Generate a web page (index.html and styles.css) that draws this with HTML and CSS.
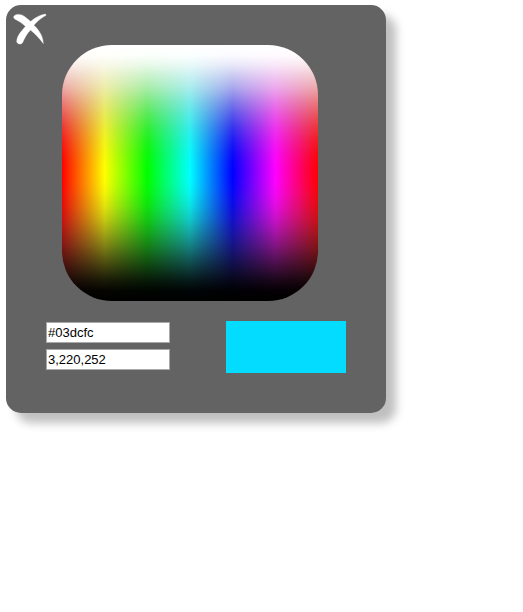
FILE: index.html
```html
<!DOCTYPE html>
<html lang="en">
<head>
<meta charset="utf-8">
<title>Color picker</title>
<link rel="stylesheet" href="styles.css">
</head>
<body>
<div class="picker">
  <button class="close" type="button" aria-label="Close">
    <svg viewBox="0 0 34 32" width="34" height="32"><path d="M1 3C3 .6 8.500 1 11.500 3.500L17.700 8.500C22 4.500 27 2 32.500 1L33 2.300C28.500 4.800 24.500 8 20.800 12.200C26 17 30 23 30.300 30.500C26.500 25.500 22 20.500 17.500 17C13.500 21 11.500 25.500 9.500 29.800C8 31.800 4.800 31.200 3.700 29C3.900 22.700 8 18.500 12.500 13.500C9 9.800 5.500 8 1.700 6C.7 5 .5 4 1 3Z" stroke="#fff" stroke-width=".4"/></svg>
  </button>
  <div class="spectrum"></div>
  <div class="row">
    <div class="fields">
      <input type="text" value="#03dcfc" aria-label="Hex">
      <input type="text" value="3,220,252" aria-label="RGB">
    </div>
    <div class="swatch"></div>
  </div>
</div>
</body>
</html>
```
FILE: styles.css
```css
html { min-height: 100%; background: #fff; }
body { display: flow-root; min-height: 100vh; margin: 0; }
.picker {
  box-sizing: border-box;
  width: 380px;
  height: 408px;
  margin: 5px 0 0 6px;
  padding: 8px 0 0;
  border-radius: 15px;
  background: #636363;
  box-shadow: 10px 10px 10px #bfbfbf;
  display: flow-root;
}
.close {
  display: block;
  width: 34px;
  height: 32px;
  margin-left: 7px;
  padding: 0;
  border: 0;
  background: none;
  fill: #fff;
}
.close svg { display: block; }
.spectrum {
  width: 256px;
  height: 256px;
  margin-left: 56px;
  border-radius: 50px;
  background:
    linear-gradient(
      #fff 0%,
      rgba(255,255,255,.985) 4%,
      rgba(248,248,248,.93) 8%,
      rgba(240,240,240,.84) 12%,
      rgba(230,230,230,.72) 17%,
      rgba(218,218,218,.57) 22%,
      rgba(206,206,206,.42) 27%,
      rgba(193,193,193,.28) 32%,
      rgba(180,180,180,.16) 37%,
      rgba(160,160,160,.07) 42%,
      rgba(140,140,140,.02) 46%,
      rgba(128,128,128,0) 50%,
      rgba(115,115,115,.02) 54%,
      rgba(95,95,95,.07) 58%,
      rgba(75,75,75,.16) 63%,
      rgba(61,61,61,.28) 68%,
      rgba(48,48,48,.42) 73%,
      rgba(37,37,37,.56) 78%,
      rgba(25,25,25,.7) 83%,
      rgba(15,15,15,.83) 88%,
      rgba(7,7,7,.92) 92%,
      rgba(0,0,0,.98) 96%,
      #000 100%),
    linear-gradient(90deg, #f00, #ff0, #0f0, #0ff, #00f, #f0f, #f00);
}
.row {
  display: flex;
  justify-content: space-between;
  margin: 20px 40px 0;
}
.fields {
  display: flex;
  flex-direction: column;
  gap: 6px;
  padding-top: 1px;
}
.fields input {
  box-sizing: border-box;
  width: 124px;
  height: 21px;
  padding: 1px;
  border: 1px solid #a9a9a9;
  border-radius: 0;
  background: #fff;
  color: #000;
  font: 13px "Liberation Sans", Arial, sans-serif;
}
.swatch { width: 120px; height: 52px; background: #03dcff; }
```
